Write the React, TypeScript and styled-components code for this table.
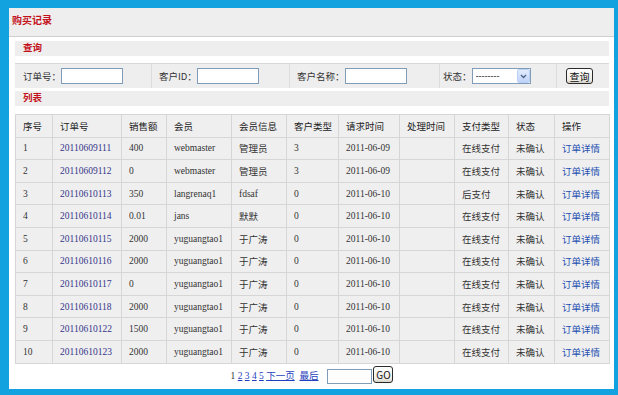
import React from "react";
import styled, { createGlobalStyle } from "styled-components";

const GlobalStyle = createGlobalStyle`
    html, body {
        margin: 0;
        padding: 0;
        background: #13a2e0;
        font-family: "Liberation Serif", "Noto Sans CJK SC", serif;
        font-size: 9.5px;
        color: #333;
    }
`;

const Page = styled.div`
    box-sizing: border-box;
    height: 395px;
    padding: 8px 4px 6px 9px;
`;

const Panel = styled.div`
    background: #fff;
    height: 381px;
    display: flex;
    flex-direction: column;
`;

const Header = styled.div`
    box-sizing: border-box;
    height: 29px;
    background: #eeeeee;
    border-bottom: 1px solid #cfcfcf;
    padding: 5px 3px 0;
    color: #c4121c;
    font-family: "Noto Sans CJK SC", sans-serif;
    font-size: 10px;
    font-weight: bold;
    line-height: 14px;
`;

const Content = styled.div`
    padding: 4px 5px 0 6px;
`;

const SectionBar = styled.div<{ $top?: number }>`
    box-sizing: border-box;
    height: 15px;
    margin-top: ${(p) => p.$top ?? 0}px;
    background: #eeeeee;
    padding-left: 8px;
    color: #c4121c;
    font-family: "Noto Sans CJK SC", sans-serif;
    font-weight: bold;
    line-height: 13px;
`;

const SearchRow = styled.div`
    box-sizing: border-box;
    display: flex;
    height: 25px;
    margin-top: 7px;
    background: #eeeeee;
    border-top: 1px solid #d8d8d8;
`;

const SearchCell = styled.div<{ $w: number; $pad: number }>`
    box-sizing: border-box;
    width: ${(p) => p.$w}px;
    display: flex;
    align-items: center;
    padding-left: ${(p) => p.$pad}px;
    & + & {
        border-left: 1px solid #dcdcdc;
    }
`;

const Label = styled.span`
    font-family: "Noto Sans CJK SC", sans-serif;
    color: #333;
    white-space: nowrap;
`;

const TextInput = styled.input<{ $w: number }>`
    box-sizing: border-box;
    width: ${(p) => p.$w}px;
    height: 16px;
    border: 1px solid #7f9db9;
    background: #fff;
    padding: 0 2px;
    margin: 0;
    font-size: 9.5px;
`;

const SelectWrap = styled.div`
    position: relative;
    width: 59px;
    height: 16px;
`;

const Select = styled.select`
    box-sizing: border-box;
    appearance: none;
    width: 100%;
    height: 16px;
    border: 1px solid #7f9db9;
    background: #fff;
    padding: 0 3px;
    margin: 0;
    font-family: "Liberation Sans", sans-serif;
    font-size: 9px;
    color: #222;
`;

const SelectArrow = styled.span`
    position: absolute;
    right: 1px;
    top: 1px;
    width: 13px;
    height: 14px;
    box-sizing: border-box;
    border: 1px solid #bcd0f4;
    border-radius: 2px;
    background: linear-gradient(#e3ecfd, #bfd2f8);
    display: flex;
    align-items: center;
    justify-content: center;
    pointer-events: none;
`;

const XpButton = styled.button<{ $w: number; $h?: number }>`
    box-sizing: border-box;
    width: ${(p) => p.$w}px;
    height: ${(p) => p.$h ?? 16}px;
    padding: 0;
    margin: 0;
    border: 1px solid #2b2b2b;
    border-radius: 3px;
    background: linear-gradient(#ffffff, #ecebe6 80%, #d6d0c5);
    font-family: "Noto Sans CJK SC", "Liberation Sans", sans-serif;
    font-size: 10px;
    line-height: 13px;
    color: #111;
`;

const Table = styled.table`
    margin-top: 8px;
    width: 594px;
    table-layout: fixed;
    border-collapse: collapse;
    background: #efefef;
`;

const Th = styled.th`
    height: 21.6px;
    padding: 0 0 0 7px;
    border: 1px solid #d6d6d6;
    font-family: "Noto Sans CJK SC", sans-serif;
    font-weight: normal;
    text-align: left;
    color: #222;
`;

const Td = styled.td<{ $kind?: "link" | "order" | "cn" }>`
    height: 21.6px;
    padding: 0 0 0 7px;
    border: 1px solid #d6d6d6;
    text-align: left;
    white-space: nowrap;
    color: ${(p) =>
        p.$kind === "link" ? "#1f4fb0" : p.$kind === "order" ? "#35358a" : "#333"};
    font-family: ${(p) =>
        p.$kind === "link" || p.$kind === "cn"
            ? `"Noto Sans CJK SC", sans-serif`
            : `"Liberation Serif", "Noto Sans CJK SC", serif`};
`;

const Pager = styled.div`
    display: flex;
    justify-content: center;
    align-items: center;
    margin-top: 2px;
    height: 18px;
`;

const PageText = styled.span`
    white-space: pre;
    margin-right: 9px;
`;

const PageLink = styled.a`
    color: #1f3fc0;
    text-decoration: underline;
    font-family: "Liberation Serif", "Noto Sans CJK SC", serif;
`;

const GoInput = styled(TextInput)`
    height: 15px;
    margin-top: 3px;
    margin-right: 1px;
`;

const columns = [
    ["序号", 37],
    ["订单号", 69],
    ["销售额", 45],
    ["会员", 65],
    ["会员信息", 55],
    ["客户类型", 52],
    ["请求时间", 61],
    ["处理时间", 55],
    ["支付类型", 54],
    ["状态", 46],
    ["操作", 55],
] as const;

const orders = [
    ["1", "20110609111", "400", "webmaster", "管理员", "3", "2011-06-09", "在线支付"],
    ["2", "20110609112", "0", "webmaster", "管理员", "3", "2011-06-09", "在线支付"],
    ["3", "20110610113", "350", "langrenaq1", "fdsaf", "0", "2011-06-10", "后支付"],
    ["4", "20110610114", "0.01", "jans", "默默", "0", "2011-06-10", "在线支付"],
    ["5", "20110610115", "2000", "yuguangtao1", "于广涛", "0", "2011-06-10", "在线支付"],
    ["6", "20110610116", "2000", "yuguangtao1", "于广涛", "0", "2011-06-10", "在线支付"],
    ["7", "20110610117", "0", "yuguangtao1", "于广涛", "0", "2011-06-10", "在线支付"],
    ["8", "20110610118", "2000", "yuguangtao1", "于广涛", "0", "2011-06-10", "在线支付"],
    ["9", "20110610122", "1500", "yuguangtao1", "于广涛", "0", "2011-06-10", "在线支付"],
    ["10", "20110610123", "2000", "yuguangtao1", "于广涛", "0", "2011-06-10", "在线支付"],
];

export default function App() {
    return (
        <Page>
            <GlobalStyle />
            <Panel>
                <Header>购买记录</Header>
                <Content>
                    <SectionBar>查询</SectionBar>
                    <SearchRow>
                        <SearchCell $w={136} $pad={8}>
                            <Label>订单号：</Label>
                            <TextInput $w={62} />
                        </SearchCell>
                        <SearchCell $w={138} $pad={7}>
                            <Label>客户ID：</Label>
                            <TextInput $w={62} />
                        </SearchCell>
                        <SearchCell $w={150} $pad={7}>
                            <Label>客户名称：</Label>
                            <TextInput $w={62} />
                        </SearchCell>
                        <SearchCell $w={117} $pad={3}>
                            <Label>状态：</Label>
                            <SelectWrap>
                                <Select defaultValue="">
                                    <option value="">--------</option>
                                    <option value="0">未确认</option>
                                    <option value="1">已确认</option>
                                </Select>
                                <SelectArrow>
                                    <svg width="7" height="5" viewBox="0 0 7 5">
                                        <path d="M1 1 L3.5 3.5 L6 1" stroke="#4d6185" strokeWidth="1.3" fill="none" />
                                    </svg>
                                </SelectArrow>
                            </SelectWrap>
                        </SearchCell>
                        <SearchCell $w={53} $pad={9}>
                            <XpButton $w={27}>查询</XpButton>
                        </SearchCell>
                    </SearchRow>
                    <SectionBar $top={3}>列表</SectionBar>
                    <Table>
                        <colgroup>
                            {columns.map(([name, w]) => (
                                <col key={name} style={{ width: w }} />
                            ))}
                        </colgroup>
                        <thead>
                            <tr>
                                {columns.map(([name]) => (
                                    <Th key={name}>{name}</Th>
                                ))}
                            </tr>
                        </thead>
                        <tbody>
                            {orders.map((r) => (
                                <tr key={r[0]}>
                                    <Td>{r[0]}</Td>
                                    <Td $kind="order">{r[1]}</Td>
                                    <Td>{r[2]}</Td>
                                    <Td>{r[3]}</Td>
                                    <Td>{r[4]}</Td>
                                    <Td>{r[5]}</Td>
                                    <Td>{r[6]}</Td>
                                    <Td></Td>
                                    <Td $kind="cn">{r[7]}</Td>
                                    <Td $kind="cn">未确认</Td>
                                    <Td $kind="link">订单详情</Td>
                                </tr>
                            ))}
                        </tbody>
                    </Table>
                    <Pager>
                        <PageText>
                            1 <PageLink href="#">2</PageLink> <PageLink href="#">3</PageLink>{" "}
                            <PageLink href="#">4</PageLink> <PageLink href="#">5</PageLink>{" "}
                            <PageLink href="#">下一页</PageLink>  <PageLink href="#">最后</PageLink>
                        </PageText>
                        <GoInput $w={45} />
                        <XpButton $w={20} $h={17}>
                            GO
                        </XpButton>
                    </Pager>
                </Content>
            </Panel>
        </Page>
    );
}
